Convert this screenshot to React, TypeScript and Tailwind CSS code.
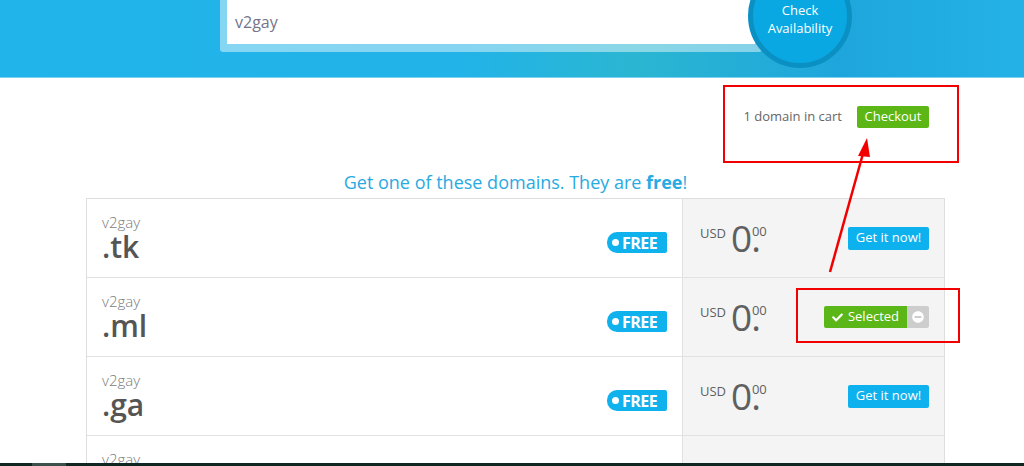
import { FaCheck, FaMinusCircle } from 'react-icons/fa';

const rows = [
  { name: 'v2gay', tld: '.tk', selected: false },
  { name: 'v2gay', tld: '.ml', selected: true },
  { name: 'v2gay', tld: '.ga', selected: false },
  { name: 'v2gay', tld: '.cf', selected: false },
];

const FreeTag = () => (
  <div className="flex h-[21px] w-[60px] items-center gap-[3px] rounded-l-[10px] rounded-r-[2px] bg-[#0fb2ec] pl-[5px] text-[16px] font-bold leading-none tracking-[-0.5px] text-white">
    <span className="h-[7px] w-[7px] shrink-0 rounded-full bg-white" />
    <span>FREE</span>
  </div>
);

const Price = () => (
  <div className="flex items-start text-[#5f5f5f]">
    <span className="mt-[6px] text-[13px] leading-none">USD</span>
    <span className="ml-[5px] text-[37px] leading-[34px] tracking-[-1px]">0.</span>
    <span className="-ml-[8px] mt-[4px] text-[13px] leading-none">00</span>
  </div>
);

const App = () => {
  return (
    <div
      className="relative flex h-[466px] w-[1024px] flex-col overflow-hidden bg-white"
      style={{ fontFamily: '"Open Sans", "Noto Sans", sans-serif' }}
    >
      {/* search header */}
      <div className="relative h-[78px] shrink-0 border-b border-[#7fd0ee] bg-[linear-gradient(to_right,#20b4ea,#22b3e8_45%,#2ab6d2_62%,#1ea6dc_82%,#24b2e6)]">
        <div className="flex items-start pl-[220px]">
          <div className="-mt-[10px] h-[62px] w-[542px] rounded-b-[3px] bg-white/45 p-[7px] pb-[8px]">
            <div className="flex h-full items-center bg-white pl-[8px] pt-[2px] text-[16px] text-[#75748a]">
              v2gay
            </div>
          </div>
          <div className="relative z-10 -ml-[14px] -mt-[36px] flex h-[104px] w-[104px] items-center justify-center rounded-full border-[5px] border-[#0b90c4] bg-[#0aa8e2] pt-[5px]">
            <div className="text-center text-[13px] leading-[18px] text-white">
              Check
              <br />
              Availability
            </div>
          </div>
        </div>
      </div>

      <div className="ml-[86px] flex w-[859px] flex-1 flex-col overflow-hidden">
        {/* cart */}
        <div className="mt-[28px] flex h-[22px] items-center justify-end gap-[15px] pr-[16px]">
          <span className="text-[13px] text-[#666]">1 domain in cart</span>
          <button className="h-[22px] w-[72px] rounded-[2px] bg-[#5cb615] text-[13px] text-white">
            Checkout
          </button>
        </div>

        <h2 className="mt-[42px] h-[24px] text-center text-[18px] leading-[24px] text-[#29aae1]">
          Get one of these domains. They are <span className="font-bold">free</span>!
        </h2>

        {/* domain table */}
        <div className="mt-[4px] border-x border-t border-[#dedede]">
          {rows.map((row) => (
            <div key={row.tld} className="flex h-[79px] border-b border-[#e2e2e2]">
              <div className="flex w-[595px] items-center justify-between pl-[15px] pr-[15px]">
                <div className="flex flex-col">
                  <span className="text-[15px] font-light leading-[18px] text-[#7a7a7a]">
                    {row.name}
                  </span>
                  <span className="text-[30px] font-semibold leading-[32px] text-[#555]">
                    {row.tld}
                  </span>
                </div>
                <div className="mt-[9px]">
                  <FreeTag />
                </div>
              </div>
              <div className="flex flex-1 items-center justify-between border-l border-[#e0e0e0] bg-[#f4f4f4] pl-[17px] pr-[15px]">
                <Price />
                {row.selected ? (
                  <div className="flex h-[22px] items-stretch rounded-[2px] text-[13px] text-white">
                    <div className="flex w-[83px] items-center justify-center gap-[5px] rounded-l-[2px] bg-[#5bb617]">
                      <FaCheck className="h-[11px] w-[11px]" />
                      <span>Selected</span>
                    </div>
                    <div className="flex w-[22px] items-center justify-center rounded-r-[2px] bg-[#cdcdcd]">
                      <FaMinusCircle className="h-[12px] w-[12px]" />
                    </div>
                  </div>
                ) : (
                  <button className="h-[23px] w-[81px] rounded-[2px] bg-[#0db1ed] text-[13px] text-white">
                    Get it now!
                  </button>
                )}
              </div>
            </div>
          ))}
        </div>
      </div>

      {/* taskbar strip */}
      <div className="flex h-[3px] shrink-0 bg-[#0f2621]">
        <div className="ml-[32px] w-[34px] bg-[#3d4f4b]" />
      </div>

      {/* annotations */}
      <div className="pointer-events-none absolute left-[723px] top-[85px] h-[78px] w-[236px] border-2 border-[#f20000]" />
      <div className="pointer-events-none absolute left-[796px] top-[288px] h-[55px] w-[164px] border-2 border-[#f20000]" />
      <svg
        className="pointer-events-none absolute left-0 top-0"
        width="1024"
        height="466"
        viewBox="0 0 1024 466"
      >
        <line x1="830" y1="272" x2="864" y2="150" stroke="#f20000" strokeWidth="2.5" />
        <polygon points="867,138 858,156 870,157" fill="#f20000" />
      </svg>
    </div>
  );
};

export default App;
